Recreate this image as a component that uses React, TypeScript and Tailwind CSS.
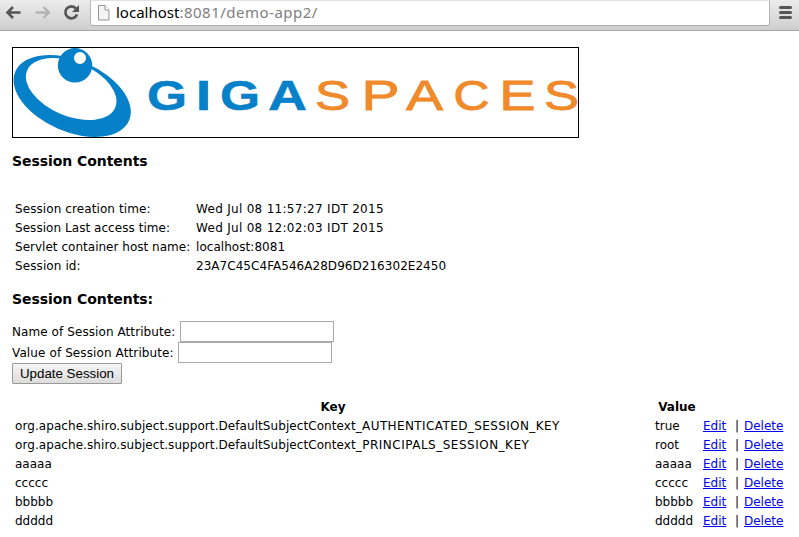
import React from 'react';

type Glyph = { ch: string; x: number; w: number };

const blue: Glyph[] = [
  { ch: 'G', x: 134, w: 40 },
  { ch: 'I', x: 183, w: 15.500 },
  { ch: 'G', x: 207, w: 40 },
  { ch: 'A', x: 255, w: 39 },
];
const orange: Glyph[] = [
  { ch: 'S', x: 302, w: 35 },
  { ch: 'P', x: 348.5, w: 38 },
  { ch: 'A', x: 393, w: 37 },
  { ch: 'C', x: 440.5, w: 36 },
  { ch: 'E', x: 486.500, w: 36 },
  { ch: 'S', x: 531, w: 35 },
];

function Logo() {
  return (
    <div className="h-[91px] w-[567px] overflow-hidden border border-black">
      <svg width="565" height="89" viewBox="0 0 565 89" className="block">
        <g fill="#0580c9">
          <ellipse cx="59.2" cy="48" rx="62" ry="35.7" transform="rotate(23.4 59.2 48)" />
          <ellipse cx="58.2" cy="41" rx="47.8" ry="27" fill="#fff" transform="rotate(22.8 58.2 41)" />
          <circle cx="62" cy="17.3" r="17.2" />
          <circle cx="67" cy="10" r="6" fill="#fff" />
        </g>
        <g fontFamily="Liberation Sans, Arial, sans-serif" fontSize="42">
          {blue.map((g) => (
            <text key={g.x} x={g.x} y="61.5" fill="#0580c9" stroke="#0580c9" strokeWidth="0.5" fontWeight="700" textLength={g.w} lengthAdjust="spacingAndGlyphs">{g.ch}</text>
          ))}
          {orange.map((g) => (
            <text key={g.x} x={g.x} y="61.5" fill="#f18a2b" stroke="#f18a2b" strokeWidth="0.9" textLength={g.w} lengthAdjust="spacingAndGlyphs">{g.ch}</text>
          ))}
        </g>
      </svg>
    </div>
  );
}

function Toolbar() {
  return (
    <header className="flex h-[31px] items-start border-b border-[#a5a5a5] bg-linear-to-b from-[#ececec] to-[#cecece]">
      <svg width="90" height="26" viewBox="0 0 90 26" fill="none" className="shrink-0">
        <path d="M20.5 12.5H8M13 7l-5.5 5.5L13 18" stroke="#555" strokeWidth="2.6" />
        <path d="M35.5 12.5H48M43.500 7l5.500 5.500L43.500 18" stroke="#b4b4b4" strokeWidth="2.4" />
        <path d="M76 8.500A6 6 0 1 0 77 14.500" stroke="#555" strokeWidth="2.7" />
        <path d="M79 5v7h-7z" fill="#555" />
      </svg>
      <div className="flex h-[26px] w-[680px] items-center rounded-b-[3px] border border-t-[#e2e2e2] border-x-[#b5b5b5] border-b-[#aaa] bg-white pl-[7px]">
        <svg width="12" height="16" viewBox="0 0 12 16" className="mr-[6px] shrink-0">
          <path d="M.5 .5h6.500l4 4.500v10H.5z" fill="#f4f4f4" stroke="#959595" />
          <path d="M7 .5V5h4" fill="#fff" stroke="#959595" />
        </svg>
        <span className="-mt-[2px] whitespace-nowrap font-['Noto_Sans',sans-serif] text-[15px] leading-[20px] tracking-[0.5px] text-[#808080]">
          <span className="tracking-normal text-black">localhost</span>:8081/demo-app2/
        </span>
      </div>
      <div className="ml-[9px] mt-[6px] flex w-[13px] flex-col gap-[2px]">
        <div className="h-[3px] rounded-sm bg-[#555]" />
        <div className="h-[3px] rounded-sm bg-[#555]" />
        <div className="h-[3px] rounded-sm bg-[#555]" />
      </div>
    </header>
  );
}

const info = [
  ['Session creation time:', 'Wed Jul 08 11:57:27 IDT 2015', 'tracking-[0.09px]', 'tracking-[0.3px]'],
  ['Session Last access time:', 'Wed Jul 08 12:02:03 IDT 2015', 'tracking-[0.05px]', 'tracking-[0.3px]'],
  ['Servlet container host name:', 'localhost:8081', 'tracking-[0.02px]', 'tracking-[0.05px]'],
  ['Session id:', '23A7C45C4FA546A28D96D216302E2450', 'tracking-[0.1px]', 'tracking-[0.04px]'],
];

const context = 'org.apache.shiro.subject.support.DefaultSubjectContext';

const attributes = [
  [context, '_AUTHENTICATED_SESSION_KEY', 'true', 'tracking-[0.39px]'],
  [context, '_PRINCIPALS_SESSION_KEY', 'root', 'tracking-[0.5px]'],
  ['aaaaa', '', 'aaaaa', ''],
  ['ccccc', '', 'ccccc', ''],
  ['bbbbb', '', 'bbbbb', ''],
  ['ddddd', '', 'ddddd', ''],
];

export default function App() {
  return (
    <div className="h-[537px] w-[799px] overflow-hidden bg-white font-['DejaVu_Sans',Verdana,sans-serif] text-[12px] text-black">
      <Toolbar />
      <main className="px-3 pt-4">
        <Logo />
        <h3 className="mt-[14px] text-[14px] leading-[18px] font-bold tracking-[-0.06px]">Session Contents</h3>
        <div className="mt-[29px] ml-[3px]">
          {info.map(([label, value, labelTracking, valueTracking]) => (
            <div key={label} className="grid h-[19px] grid-cols-[181px_auto] items-center whitespace-nowrap">
              <span className={labelTracking}>{label}</span>
              <span className={valueTracking}>{value}</span>
            </div>
          ))}
        </div>
        <h3 className="mt-[15px] text-[14px] leading-[18px] font-bold tracking-[-0.06px]">Session Contents:</h3>
        <form className="mt-[13px]" onSubmit={(e) => e.preventDefault()}>
          <label className="flex h-[21px] items-center">
            <span className="w-[168px] whitespace-nowrap tracking-[0.08px]">Name of Session Attribute:</span>
            <input className="h-[21px] w-[154px] border border-[#a9a9a9] px-1" />
          </label>
          <label className="flex h-[21px] items-center">
            <span className="w-[166px] whitespace-nowrap tracking-[0.11px]">Value of Session Attribute:</span>
            <input className="h-[21px] w-[154px] border border-[#a9a9a9] px-1" />
          </label>
          <button className="block h-[21px] w-[110px] rounded-[1px] border border-[#999] bg-linear-to-b from-[#f5f5f5] to-[#dcdcdc] font-['Liberation_Sans',Arial,sans-serif] text-[13.33px] leading-[19px] whitespace-nowrap">
            Update Session
          </button>
        </form>
        <div className="mt-[13px] ml-[3px] whitespace-nowrap">
          <div className="grid h-[19px] grid-cols-[636px_44px] gap-x-1 items-center text-center font-bold">
            <span>Key</span>
            <span>Value</span>
          </div>
          {attributes.map(([prefix, suffix, value, tracking]) => (
            <div key={prefix + suffix} className="grid h-[19px] grid-cols-[640px_48px_32px_9px_auto] items-center">
              <span className={suffix ? 'tracking-[0.07px]' : 'tracking-normal'}>
                {prefix}
                {suffix && <span className={tracking}>{suffix}</span>}
              </span>
              <span>{value}</span>
              <a href="#edit" className="text-[#0000ee] underline">Edit</a>
              <span>|</span>
              <a href="#delete" className="text-[#0000ee] underline">Delete</a>
            </div>
          ))}
        </div>
      </main>
    </div>
  );
}
